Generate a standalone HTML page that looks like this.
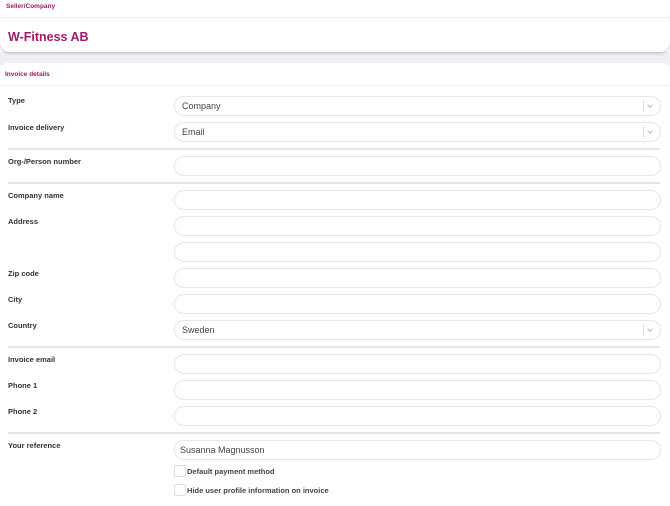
<!DOCTYPE html>
<html><head><style>
body{margin:0;width:670px;height:506px;background:#fff;font-family:"Liberation Sans",sans-serif;position:relative;overflow:hidden}
.a{position:absolute}
.top{left:0;top:0;width:670px;height:52px;background:#fff;border-radius:0 0 10px 10px;box-shadow:0 1px 3px rgba(0,0,0,.25);z-index:2}
.gray{left:0;top:52px;width:670px;height:14px;background:#eff0f4}
.card{left:0;top:63px;width:670px;height:443px;background:#fff;border-radius:8px 8px 0 0}
.lbl{left:8px;font-size:7.5px;font-weight:bold;color:#333}
.in{left:174px;height:18px;border:1px solid #e6e6e6;border-radius:10px;font-size:9px;color:#444;line-height:18px;padding-left:7px;box-sizing:content-box;width:478px}
.sep{left:8px;width:652px;height:1.5px;background:#e6e6e6}
.dd{position:absolute;right:5px;top:3px;height:12px;border-left:1px solid #ddd;width:11px}
.dd:after{content:"";position:absolute;left:4px;top:3px;width:3px;height:3px;border-right:1px solid #bbb;border-bottom:1px solid #bbb;transform:rotate(45deg)}
.cb{left:174px;width:10px;height:10px;border:1px solid #ddd;border-radius:2px}
.cl{left:187px;font-size:7.5px;font-weight:bold;color:#444}
</style></head><body>
<div class="a top">
<div class="a" style="left:6px;top:3px;font-size:6.5px;font-weight:bold;color:#a0196e">Seller/Company</div>
<div class="a" style="left:0;top:17px;width:670px;height:1px;background:#eee"></div>
<div class="a" style="left:8px;top:30px;font-size:12.5px;font-weight:bold;color:#a0196e">W-Fitness AB</div>
</div>
<div class="a gray"></div>
<div class="a card"></div>
<div class="a" style="left:5px;top:71px;font-size:6.5px;font-weight:bold;color:#a0196e">Invoice details</div>
<div class="a" style="left:0;top:85px;width:670px;height:1px;background:#eee"></div>

<div class="a lbl" style="top:96px">Type</div>
<div class="a in" style="top:96px">Company<span class="dd"></span></div>
<div class="a lbl" style="top:123px">Invoice delivery</div>
<div class="a in" style="top:122px">Email<span class="dd"></span></div>
<div class="a sep" style="top:148px"></div>
<div class="a lbl" style="top:157px">Org-/Person number</div>
<div class="a in" style="top:156px"></div>
<div class="a sep" style="top:182px"></div>
<div class="a lbl" style="top:191px">Company name</div>
<div class="a in" style="top:190px"></div>
<div class="a lbl" style="top:217px">Address</div>
<div class="a in" style="top:216px"></div>
<div class="a in" style="top:242px"></div>
<div class="a lbl" style="top:269px">Zip code</div>
<div class="a in" style="top:268px"></div>
<div class="a lbl" style="top:295px">City</div>
<div class="a in" style="top:294px"></div>
<div class="a lbl" style="top:321px">Country</div>
<div class="a in" style="top:320px">Sweden<span class="dd"></span></div>
<div class="a sep" style="top:346px"></div>
<div class="a lbl" style="top:355px">Invoice email</div>
<div class="a in" style="top:354px"></div>
<div class="a lbl" style="top:381px">Phone 1</div>
<div class="a in" style="top:380px"></div>
<div class="a lbl" style="top:407px">Phone 2</div>
<div class="a in" style="top:406px"></div>
<div class="a sep" style="top:432px"></div>
<div class="a lbl" style="top:441px">Your reference</div>
<div class="a in" style="top:440px;padding-left:5px;width:480px">Susanna Magnusson</div>
<div class="a cb" style="top:465px"></div>
<div class="a cl" style="top:467px">Default payment method</div>
<div class="a cb" style="top:484px"></div>
<div class="a cl" style="top:486px">Hide user profile information on invoice</div>
</body></html>
